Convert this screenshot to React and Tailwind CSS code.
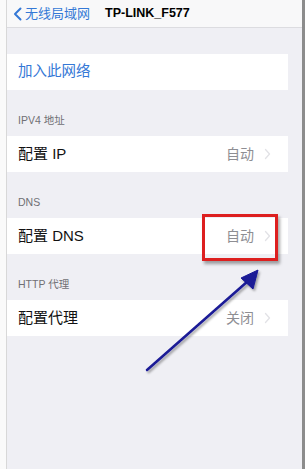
import React from 'react';

const cn = { fontFamily: '"Liberation Sans", "Noto Sans CJK SC", sans-serif' };

const Chevron = () => (
  <svg width="7" height="12" viewBox="0 0 7 12" className="ml-[10px]">
    <path d="M1.5 1.5l4 4.5-4 4.5" fill="none" stroke="#e2e2e6" strokeWidth="1.3" strokeLinecap="round" strokeLinejoin="round" />
  </svg>
);

const Header = ({ children }) => (
  <div className="h-[46px] flex items-end pb-[7px] pl-[11px] text-[10.5px] text-[#707075]">{children}</div>
);

const Row = ({ label, value }) => (
  <div className="h-[36px] bg-white flex items-center pl-[11px] pr-[17px] mr-[14px]">
    <span className="text-[15px] text-[#111]">{label}</span>
    <span className="ml-auto text-[14px] text-[#8e8e93]">{value}</span>
    <Chevron />
  </div>
);

export default function App() {
  return (
    <div className="w-[305px] h-[469px] flex bg-white overflow-hidden" style={cn}>
      {/* 左侧边框 */}
      <div className="w-[7px] h-full bg-[#fafafa] border-r border-[#d8d8d8]" />

      <div className="relative flex-1 h-full bg-[#efeff4] flex flex-col">
        {/* 顶部导航 */}
        <div className="h-[28px] bg-[#f8f8f9] border-b border-[#dcdce0] flex items-center pl-[6px]">
          <svg width="9" height="14" viewBox="0 0 9 14">
            <path d="M7.5 1.5L2 7l5.5 5.5" fill="none" stroke="#3478d6" strokeWidth="2" strokeLinecap="round" strokeLinejoin="round" />
          </svg>
          <span className="ml-[3px] text-[13px] text-[#3478d6]">无线局域网</span>
          <span className="ml-[15px] text-[12.5px] font-bold text-black">TP-LINK_F577</span>
        </div>

        <div className="h-[26px]" />

        <div className="h-[36px] bg-white flex items-center pl-[11px] mr-[14px]">
          <span className="text-[14.5px] text-[#3478d6]">加入此网络</span>
        </div>

        <Header>IPV4 地址</Header>
        <Row label="配置 IP" value="自动" />

        <Header>DNS</Header>
        <Row label="配置 DNS" value="自动" />

        <Header>HTTP 代理</Header>
        <Row label="配置代理" value="关闭" />

        {/* 红框标注 */}
        <div className="absolute left-[195px] top-[214px] w-[76px] h-[47px] border-[3px] border-[#dd1f1f] shadow-[2px_3px_3px_rgba(0,0,0,0.35)]" />

        {/* 箭头 */}
        <svg className="absolute left-0 top-0" width="295" height="469" viewBox="0 0 295 469">
          <defs>
            <filter id="sh" x="-20%" y="-20%" width="140%" height="140%">
              <feDropShadow dx="1.5" dy="2" stdDeviation="1.2" floodColor="#000" floodOpacity="0.35" />
            </filter>
          </defs>
          <g filter="url(#sh)">
            <line x1="140" y1="370" x2="241" y2="281" stroke="#1a1a96" strokeWidth="2.5" strokeLinecap="round" />
            <path d="M251 270L246 289L234 278Z" fill="#1a1a96" stroke="#1a1a96" strokeWidth="1" strokeLinejoin="round" />
          </g>
        </svg>
      </div>

      {/* 右侧边框 */}
      <div className="w-[3px] h-full bg-[#8c8c8c]" />
    </div>
  );
}
